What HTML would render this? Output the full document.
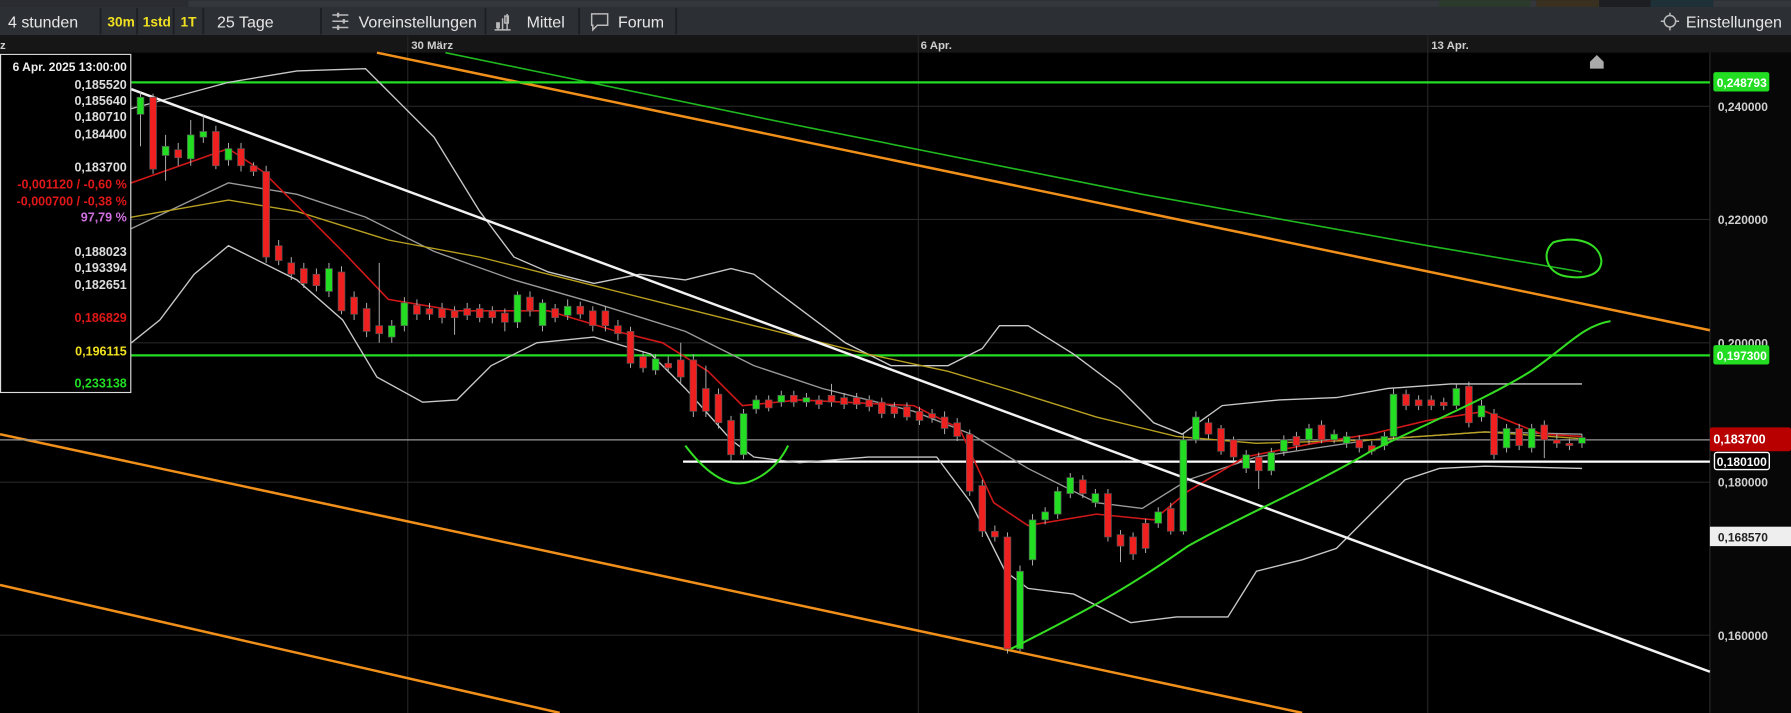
<!DOCTYPE html>
<html><head><meta charset="utf-8"><style>
html,body{margin:0;padding:0;background:#000;overflow:hidden}
svg{display:block}
text{font-family:"Liberation Sans",Arial,sans-serif}
</style></head><body>
<svg width="1791" height="713" viewBox="0 0 1568 624" xmlns="http://www.w3.org/2000/svg">
<rect width="1568" height="624" fill="#000"/>
<!-- top strip -->
<rect x="0" y="0" width="1568" height="6" fill="#34373c"/>
<rect x="0" y="0" width="165" height="6" fill="#2a2c30"/>
<rect x="1260" y="0" width="80" height="6" fill="#2c3a2c"/>
<rect x="1345" y="0" width="55" height="6" fill="#3a3020"/>
<rect x="1400" y="0" width="45" height="6" fill="#1c1e22"/>
<rect x="1445" y="0" width="55" height="6" fill="#1e3038"/>
<!-- toolbar -->
<rect x="0" y="6" width="1568" height="25" fill="#2c2f34"/>
<line x1="0" y1="31" x2="1568" y2="31" stroke="#17191b"/>
<g stroke="#1c1e21" stroke-width="1.5">
<line x1="88" y1="7" x2="88" y2="30"/><line x1="120" y1="7" x2="120" y2="30"/><line x1="152" y1="7" x2="152" y2="30"/><line x1="178" y1="7" x2="178" y2="30"/><line x1="281" y1="7" x2="281" y2="30"/><line x1="425" y1="7" x2="425" y2="30"/><line x1="507" y1="7" x2="507" y2="30"/><line x1="592" y1="7" x2="592" y2="30"/>
</g>
<g font-size="14" fill="#e6e6e6">
<text x="7" y="24">4 stunden</text>
<text x="94" y="23" fill="#f0e020" font-weight="bold" font-size="12">30m</text>
<text x="125" y="23" fill="#f0e020" font-weight="bold" font-size="12">1std</text>
<text x="158" y="23" fill="#f0e020" font-weight="bold" font-size="12">1T</text>
<text x="190" y="24">25 Tage</text>
<text x="314" y="24">Voreinstellungen</text>
<text x="461" y="24">Mittel</text>
<text x="541" y="24">Forum</text>
<text x="1476" y="24">Einstellungen</text>
</g>
<!-- toolbar icons -->
<g stroke="#bbb" stroke-width="1.3" fill="none">
<path d="M291 13h14M291 18.5h14M291 24h14"/>
<path d="M296 11v4M301 16.5v4M296 22v4" stroke-width="2"/>
<path d="M436 20v6M440 16v10M444 12v14M433 26h14"/>
<rect x="435" y="20" width="2" height="4"/><rect x="442" y="14" width="3" height="6"/>
<path d="M518 12h14v10h-9l-4 4v-4h-1z"/>
<circle cx="1462" cy="18.5" r="5"/>
<path d="M1454 18.5h3M1467 18.5h3M1462 11v2.5M1462 24v2.5"/>
</g>
<!-- date bar -->
<rect x="0" y="31" width="1568" height="15" fill="#161616"/>
<g font-size="10" font-weight="bold" fill="#cfcfcf">
<text x="0" y="43">z</text><text x="360" y="43">30 März</text><text x="806" y="43">6 Apr.</text><text x="1253" y="43">13 Apr.</text>
</g>
<!-- right axis area -->
<rect x="1497" y="46" width="71" height="578" fill="#070707"/>
<line x1="1497" y1="46" x2="1497" y2="624" stroke="#2a2a2a"/>
<!-- grid -->
<g stroke="#262626" stroke-width="1">
<line x1="357" y1="31" x2="357" y2="624"/><line x1="804" y1="31" x2="804" y2="624"/><line x1="1250" y1="31" x2="1250" y2="624"/>
<line x1="0" y1="93" x2="1497" y2="93"/><line x1="0" y1="192" x2="1497" y2="192"/><line x1="0" y1="300" x2="1497" y2="300"/><line x1="0" y1="422" x2="1497" y2="422"/><line x1="0" y1="556" x2="1497" y2="556"/>
</g>
<!-- orange channels -->
<g stroke="#f0901a" stroke-width="2.2" fill="none">
<line x1="330" y1="46" x2="1497" y2="289"/>
<line x1="0" y1="380" x2="1140" y2="624"/>
<line x1="0" y1="512" x2="490" y2="624"/>
</g>
<!-- long green MA -->
<path d="M390 46 L700 110 L1000 170 L1250 215 L1385 238" stroke="#1fb81f" stroke-width="1.4" fill="none"/>
<!-- horizontal lines -->
<line x1="115" y1="72" x2="1497" y2="72" stroke="#22dd22" stroke-width="2"/>
<line x1="0" y1="311" x2="1497" y2="311" stroke="#22dd22" stroke-width="2"/>
<line x1="0" y1="385" x2="1497" y2="385" stroke="#999" stroke-width="1"/>
<line x1="598" y1="404" x2="1497" y2="404" stroke="#fff" stroke-width="2"/>
<!-- bollinger -->
<g fill="none" stroke-width="1.2">
<polyline stroke="#c8c8c8" points="115,95 200,72 260,62 320,60 350,90 380,120 420,185 450,225 480,238 520,248 560,240 600,245 640,235 660,240 700,270 740,300 780,320 830,320 860,305 875,285 900,285 940,310 980,340 1010,370 1035,380 1070,355 1120,350 1170,348 1215,340 1270,336 1385,336"/>
<polyline stroke="#c8c8c8" points="115,300 140,280 170,240 200,215 260,245 300,280 330,330 370,352 400,350 430,320 470,300 520,295 570,310 600,340 640,385 660,400 700,405 760,400 820,400 850,440 880,500 900,515 940,520 990,545 1030,540 1075,540 1100,500 1140,490 1170,480 1200,450 1230,420 1260,410 1300,408 1385,410"/>
<polyline stroke="#9a9a9a" points="0,198 115,200 200,160 260,170 320,190 380,220 450,245 520,265 600,290 660,320 720,340 800,360 850,380 900,410 960,440 1000,445 1040,420 1100,400 1200,385 1300,378 1385,380"/>
<polyline stroke="#b8a020" points="0,210 60,200 115,190 200,175 260,185 340,210 420,225 500,245 580,265 660,285 760,310 830,325 880,340 960,365 1030,382 1100,388 1200,385 1300,378 1385,384"/>
<polyline stroke="#d01818" stroke-width="1.4" points="0,225 60,210 115,160 200,130 230,150 260,180 300,220 340,262 400,272 480,272 540,290 580,300 620,325 650,355 700,350 800,355 840,375 870,440 900,460 960,450 1010,455 1040,430 1090,400 1150,388 1200,380 1250,368 1300,360 1350,380 1385,382"/>
</g>
<!-- white trendline -->
<line x1="115" y1="78" x2="1497" y2="588" stroke="#f2f2f2" stroke-width="2.2"/>
<!-- candles -->
<g stroke="#bbb" stroke-width="0.8">
<path d="M123 80v48M134 82v70M145 118v40M156 125v20M167 105v40M178 100v25M189 110v38M200 125v20M211 125v25M222 142v12M233 145v85M244 210v22M255 225v20M266 230v22M277 235v20M288 230v30M299 233v42M310 255v25M321 265v30M332 230v70M343 280v20M354 260v30M365 262v18M376 265v15M387 265v18M398 268v25M409 265v15M420 266v16M431 268v15M442 270v20M453 255v32M464 255v22M475 262v28M486 266v16M497 262v18M508 264v15M519 268v22M530 268v22M541 280v18M552 286v36M563 308v18M574 310v18M585 312v14M596 300v35M607 310v55M618 320v45M629 340v35M640 364v40M651 358v44M662 346v16M673 346v14M684 342v14M695 342v14M706 344v12M717 346v12M728 336v20M739 344v14M750 344v14M761 346v14M772 348v18M783 352v14M794 352v16M805 356v16M816 358v12M827 360v20M838 366v20M849 376v58M860 420v50M871 460v14M882 466v106M893 495v75M904 450v45M915 444v15M926 426v28M937 414v22M948 416v20M959 428v16M970 428v46M981 464v28M992 466v24M1003 454v30M1014 444v18M1025 440v28M1036 380v88M1047 360v28M1058 366v18M1069 372v26M1080 382v22M1091 394v20M1102 396v32M1113 392v24M1124 381v18M1135 378v16M1146 371v18M1157 368v20M1168 376v12M1179 378v14M1190 381v15M1201 386v12M1212 378v16M1220 340v46M1231 341v18M1242 346v13M1253 346v13M1264 348v11M1275 336v22M1286 334v40M1297 350v19M1308 358v44M1319 371v25M1330 371v23M1341 371v25M1352 368v33M1363 380v12M1374 384v10M1385 380v12"/>
</g>
<g stroke="#555" stroke-width="0.6">
<g fill="#22dd22">
<rect x="120" y="85" width="6" height="15"/><rect x="142" y="128" width="6" height="8"/><rect x="164" y="118" width="6" height="21"/><rect x="175" y="115" width="6" height="5"/><rect x="197" y="130" width="6" height="10"/><rect x="285" y="235" width="6" height="20"/><rect x="340" y="285" width="6" height="10"/><rect x="351" y="265" width="6" height="20"/><rect x="450" y="258" width="6" height="24"/><rect x="472" y="265" width="6" height="20"/><rect x="494" y="268" width="6" height="8"/><rect x="571" y="314" width="6" height="10"/><rect x="648" y="362" width="6" height="36"/><rect x="659" y="350" width="6" height="8"/><rect x="681" y="346" width="6" height="6"/><rect x="703" y="348" width="6" height="4"/><rect x="890" y="500" width="6" height="68"/><rect x="901" y="455" width="6" height="35"/><rect x="912" y="448" width="6" height="7"/><rect x="923" y="430" width="6" height="20"/><rect x="934" y="418" width="6" height="14"/><rect x="956" y="432" width="6" height="8"/><rect x="1011" y="448" width="6" height="10"/><rect x="1033" y="385" width="6" height="80"/><rect x="1044" y="365" width="6" height="20"/><rect x="1088" y="398" width="6" height="12"/><rect x="1110" y="396" width="6" height="16"/><rect x="1121" y="385" width="6" height="10"/><rect x="1143" y="375" width="6" height="10"/><rect x="1165" y="380" width="6" height="5"/><rect x="1176" y="382" width="6" height="6"/><rect x="1209" y="382" width="6" height="8"/><rect x="1217" y="345" width="6" height="37"/><rect x="1272" y="340" width="6" height="15"/><rect x="1294" y="355" width="6" height="10"/><rect x="1316" y="375" width="6" height="17"/><rect x="1338" y="375" width="6" height="17"/><rect x="1382" y="383" width="6" height="5"/>
</g>
<g fill="#ee2020">
<rect x="131" y="85" width="6" height="63"/><rect x="153" y="131" width="6" height="7"/><rect x="186" y="115" width="6" height="30"/><rect x="208" y="130" width="6" height="15"/><rect x="219" y="145" width="6" height="5"/><rect x="230" y="150" width="6" height="75"/><rect x="241" y="215" width="6" height="13"/><rect x="252" y="230" width="6" height="10"/><rect x="263" y="235" width="6" height="13"/><rect x="274" y="240" width="6" height="10"/><rect x="296" y="238" width="6" height="34"/><rect x="307" y="260" width="6" height="15"/><rect x="318" y="270" width="6" height="20"/><rect x="329" y="285" width="6" height="7"/><rect x="362" y="267" width="6" height="8"/><rect x="373" y="270" width="6" height="5"/><rect x="384" y="270" width="6" height="8"/><rect x="395" y="272" width="6" height="6"/><rect x="406" y="270" width="6" height="6"/><rect x="417" y="270" width="6" height="8"/><rect x="428" y="272" width="6" height="6"/><rect x="439" y="274" width="6" height="8"/><rect x="461" y="260" width="6" height="12"/><rect x="483" y="270" width="6" height="8"/><rect x="505" y="268" width="6" height="7"/><rect x="516" y="272" width="6" height="13"/><rect x="527" y="272" width="6" height="13"/><rect x="538" y="285" width="6" height="7"/><rect x="549" y="290" width="6" height="28"/><rect x="560" y="312" width="6" height="10"/><rect x="582" y="318" width="6" height="4"/><rect x="593" y="315" width="6" height="15"/><rect x="604" y="315" width="6" height="45"/><rect x="615" y="340" width="6" height="20"/><rect x="626" y="345" width="6" height="25"/><rect x="637" y="368" width="6" height="30"/><rect x="670" y="350" width="6" height="7"/><rect x="692" y="346" width="6" height="6"/><rect x="714" y="350" width="6" height="4"/><rect x="725" y="346" width="6" height="6"/><rect x="736" y="348" width="6" height="6"/><rect x="747" y="348" width="6" height="6"/><rect x="758" y="350" width="6" height="6"/><rect x="769" y="352" width="6" height="10"/><rect x="780" y="356" width="6" height="6"/><rect x="791" y="356" width="6" height="9"/><rect x="802" y="360" width="6" height="8"/><rect x="813" y="362" width="6" height="4"/><rect x="824" y="365" width="6" height="10"/><rect x="835" y="370" width="6" height="12"/><rect x="846" y="380" width="6" height="50"/><rect x="857" y="425" width="6" height="40"/><rect x="868" y="465" width="6" height="5"/><rect x="879" y="470" width="6" height="98"/><rect x="945" y="420" width="6" height="12"/><rect x="967" y="432" width="6" height="38"/><rect x="978" y="468" width="6" height="10"/><rect x="989" y="470" width="6" height="15"/><rect x="1000" y="458" width="6" height="22"/><rect x="1022" y="445" width="6" height="20"/><rect x="1055" y="370" width="6" height="10"/><rect x="1066" y="375" width="6" height="20"/><rect x="1077" y="385" width="6" height="15"/><rect x="1099" y="400" width="6" height="12"/><rect x="1132" y="382" width="6" height="8"/><rect x="1154" y="372" width="6" height="13"/><rect x="1187" y="385" width="6" height="7"/><rect x="1198" y="390" width="6" height="5"/><rect x="1228" y="345" width="6" height="10"/><rect x="1239" y="350" width="6" height="5"/><rect x="1250" y="350" width="6" height="5"/><rect x="1261" y="352" width="6" height="3"/><rect x="1283" y="338" width="6" height="32"/><rect x="1305" y="362" width="6" height="36"/><rect x="1327" y="375" width="6" height="15"/><rect x="1349" y="372" width="6" height="13"/><rect x="1360" y="385" width="6" height="3"/><rect x="1371" y="388" width="6" height="2"/>
</g>
</g>
<!-- hand-drawn green -->
<g stroke="#33dd22" stroke-width="1.8" fill="none">
<path d="M885 568 C940 540 980 520 1040 478 C1090 450 1150 425 1200 395 C1250 370 1300 350 1340 325 C1370 305 1385 285 1410 281"/>
<path d="M1360 212 C1380 206 1400 212 1402 228 C1402 242 1385 244 1372 242 C1355 240 1348 222 1360 212 Z"/>
<path d="M600 390 C615 410 635 428 655 422 C672 416 683 404 690 390"/>
</g>
<!-- house icon -->
<path d="M1392 60v-6l6-6 6 6v6z" fill="#aaa"/>
<!-- info box -->
<rect x="0.5" y="47.5" width="114" height="296" fill="#000" stroke="#ddd" stroke-width="1"/>
<g font-size="11" font-weight="bold" text-anchor="end">
<text x="111" y="62" fill="#eee" font-size="10.5">6 Apr. 2025 13:00:00</text>
<text x="111" y="78" fill="#ddd">0,185520</text>
<text x="111" y="92" fill="#ddd">0,185640</text>
<text x="111" y="106" fill="#ddd">0,180710</text>
<text x="111" y="121" fill="#ddd">0,184400</text>
<text x="111" y="150" fill="#ddd">0,183700</text>
<text x="111" y="165" fill="#e01818">-0,001120 / -0,60 %</text>
<text x="111" y="180" fill="#e01818">-0,000700 / -0,38 %</text>
<text x="111" y="194" fill="#d070e0">97,79 %</text>
<text x="111" y="224" fill="#ddd">0,188023</text>
<text x="111" y="238" fill="#ddd">0,193394</text>
<text x="111" y="253" fill="#ddd">0,182651</text>
<text x="111" y="282" fill="#e01818">0,186829</text>
<text x="111" y="311" fill="#f0e020">0,196115</text>
<text x="111" y="339" fill="#22dd22">0,233138</text>
</g>
<!-- axis labels -->
<g font-size="10.5" font-weight="bold" fill="#cfcfcf">
<text x="1504" y="97">0,240000</text>
<text x="1504" y="196">0,220000</text>
<text x="1504" y="304">0,200000</text>
<text x="1504" y="426">0,180000</text>
<text x="1504" y="560">0,160000</text>
</g>
<rect x="1500" y="63" width="49" height="17" rx="2" fill="#22dd22"/>
<text x="1503" y="76" font-size="10.5" font-weight="bold" fill="#fff">0,248793</text>
<rect x="1500" y="302" width="49" height="17" rx="2" fill="#22dd22"/>
<text x="1503" y="315" font-size="10.5" font-weight="bold" fill="#fff">0,197300</text>
<rect x="1497" y="374" width="71" height="21" rx="2" fill="#b80000"/>
<text x="1500" y="388" font-size="11" font-weight="bold" fill="#fff">0,183700</text>
<rect x="1501" y="396" width="48" height="15" rx="2" fill="#000" stroke="#fff" stroke-width="1.2"/>
<text x="1503" y="408" font-size="10.5" font-weight="bold" fill="#fff">0,180100</text>
<rect x="1497" y="461" width="71" height="17" fill="#eeeeee"/>
<text x="1504" y="474" font-size="10.5" font-weight="bold" fill="#222">0,168570</text>
</svg>
</body></html>
